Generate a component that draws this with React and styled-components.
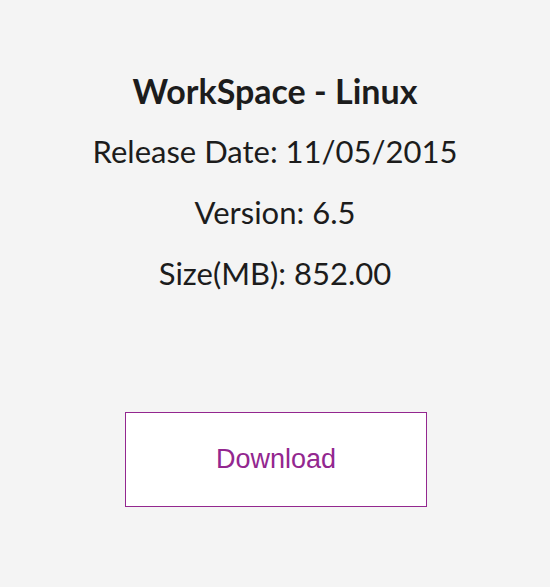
import React from "react";
import styled, { createGlobalStyle } from "styled-components";

const Global = createGlobalStyle`
  html, body { margin: 0; padding: 0; background: #f4f4f4; }
  body { font-family: "Lato", "Liberation Sans", sans-serif; }
`;

const Page = styled.div`
  width: 550px;
  height: 587px;
  background: #f4f4f4;
  display: flex;
  flex-direction: column;
  align-items: center;
  padding-top: 70px;
  box-sizing: border-box;
`;

const Title = styled.h1`
  margin: 0;
  font-family: "Lato", sans-serif;
  font-weight: 700;
  font-size: 34px;
  line-height: 42px;
  color: #1c1c1c;
`;

const Info = styled.p`
  margin: ${(p) => p.$top || 19}px 0 0;
  font-family: "Lato", sans-serif;
  font-weight: 400;
  font-size: 31px;
  line-height: 42px;
  color: #1c1c1c;
`;

const Button = styled.button`
  margin: 118px 0 0 2px;
  width: 302px;
  height: 95px;
  background: #ffffff;
  border: 1px solid #93278f;
  color: #93278f;
  font-family: "Liberation Sans", Arial, sans-serif;
  font-size: 27px;
  cursor: pointer;
`;

export default function App() {
  return (
    <>
      <Global />
      <Page>
        <Title>WorkSpace - Linux</Title>
        <Info $top={18}>Release Date: 11/05/2015</Info>
        <Info>Version: 6.5</Info>
        <Info>Size(MB): 852.00</Info>
        <Button>Download</Button>
      </Page>
    </>
  );
}
